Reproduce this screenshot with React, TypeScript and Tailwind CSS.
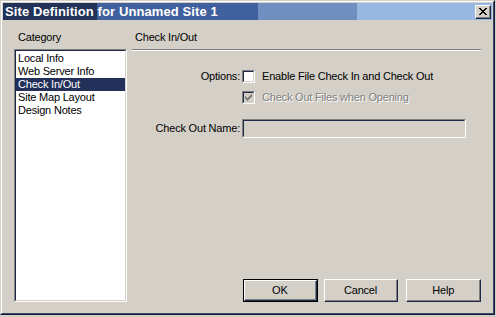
import React from "react";

function Check({ gray }: { gray?: boolean }) {
  return (
    <svg width="7" height="7" viewBox="0 0 7 7" className="block">
      <path
        d="M0 2h1v1h1v1h1V3h1V2h1V1h1V0h1v3h-1v1h-1v1h-1v1h-1v1h-1V6H1V5H0z"
        fill={gray ? "#808080" : "#000"}
      />
    </svg>
  );
}

function CheckBox({ checked, disabled }: { checked?: boolean; disabled?: boolean }) {
  return (
    <div className="w-[13px] h-[13px] border-t border-l border-t-[#808080] border-l-[#808080] border-r border-b border-r-white border-b-white">
      <div
        className={
          "w-full h-full border-t border-l border-t-[#1f2a48] border-l-[#1f2a48] border-r border-b border-r-[#d4d0c8] border-b-[#d4d0c8] flex items-center justify-center " +
          (disabled ? "bg-[#d4d0c8]" : "bg-white")
        }
      >
        {checked && <Check gray={disabled} />}
      </div>
    </div>
  );
}

function Button({ label, isDefault, className }: { label: string; isDefault?: boolean; className?: string }) {
  const inner = (
    <div className="w-full h-full border-t border-l border-t-white border-l-white border-r border-b border-r-[#1f2a48] border-b-[#1f2a48]">
      <div className="w-full h-full border-r border-b border-r-[#808080] border-b-[#808080] flex items-center justify-center">
        {label}
      </div>
    </div>
  );
  return (
    <div className={"w-[75px] h-[23px] " + (className ?? "")}>
      {isDefault ? <div className="w-full h-full border border-black">{inner}</div> : inner}
    </div>
  );
}

export default function App() {
  return (
    <div className="w-[496px] h-[317px] bg-[#d4d0c8] font-['Liberation_Sans',Arial,sans-serif] text-[11px] leading-[13px] tracking-[-0.2px] text-black">
      <div className="w-[495px] h-[315px] border border-t-[#d4d0c8] border-l-[#d4d0c8] border-r-[#0f1b3a] border-b-[#0f1b3a]">
        <div className="w-full h-full border border-t-white border-l-white border-r-[#3c4a6c] border-b-[#3c4a6c] p-px flex flex-col">
          {/* Title bar */}
          <div className="h-[17px] flex items-center bg-[linear-gradient(to_right,#223258_0px,#223258_94px,#41609e_94px,#41609e_255px,#6f8fc0_255px,#6f8fc0_354px,#98b8e1_354px)]">
            <span className="pl-[2px] text-white font-bold text-[13px] leading-[17px] tracking-[0.1px] whitespace-nowrap">
              Site Definition for Unnamed Site 1
            </span>
            <div className="ml-auto mr-px w-[16px] h-[14px] border-t border-l border-t-white border-l-white border-r border-b border-r-[#1f2a48] border-b-[#1f2a48] bg-[#d4d0c8]">
              <div className="w-full h-full border-r border-b border-r-[#808080] border-b-[#808080] flex items-center justify-center">
                <svg width="8" height="7" viewBox="0 0 8 7" className="block">
                  <path d="M0 0h2v1h1v1h2V1h1V0h2v1H7v1H6v1H5v1h1v1h1v1h1v1H6V6H5V5H3v1H2v1H0V6h1V5h1V4h1V3H2V2H1V1H0z" fill="#000" />
                </svg>
              </div>
            </div>
          </div>

          {/* Body */}
          <div className="flex-1 flex pl-[11px] pb-[10px]">
            {/* Left column */}
            <div className="w-[113px] flex flex-col">
              <div className="mt-[11px] h-[13px] pl-[4px] whitespace-nowrap">Category</div>
              <div className="mt-[5px] flex-1 border-t border-l border-t-[#808080] border-l-[#808080] border-r border-b border-r-white border-b-white">
                <div className="w-full h-full bg-white border-t border-l border-t-[#1f2a48] border-l-[#1f2a48] border-r border-b border-r-[#d4d0c8] border-b-[#d4d0c8] pt-px">
                  <div className="h-[13px] pl-[2px] whitespace-nowrap">Local Info</div>
                  <div className="h-[13px] pl-[2px] whitespace-nowrap">Web Server Info</div>
                  <div className="h-[13px] pl-[2px] whitespace-nowrap bg-[#22305a] text-white">Check In/Out</div>
                  <div className="h-[13px] pl-[2px] whitespace-nowrap">Site Map Layout</div>
                  <div className="h-[13px] pl-[2px] whitespace-nowrap">Design Notes</div>
                </div>
              </div>
            </div>

            {/* Right column */}
            <div className="ml-[5px] w-[349px] flex flex-col">
              <div className="mt-[11px] h-[13px] pl-[3px] whitespace-nowrap">Check In/Out</div>
              <div className="mt-[5px] border-t border-t-[#808080] border-b border-b-white" />

              <div className="mt-[19px] grid grid-cols-[108px_1fr] gap-x-[2px] items-center">
                <div className="text-right whitespace-nowrap">Options:</div>
                <div className="flex items-center gap-[7px]">
                  <CheckBox />
                  <span className="whitespace-nowrap">Enable File Check In and Check Out</span>
                </div>

                <div className="mt-[8px]" />
                <div className="mt-[8px] flex items-center gap-[7px]">
                  <CheckBox checked disabled />
                  <span className="whitespace-nowrap text-[#808080] [text-shadow:1px_1px_0_#ffffff]">Check Out Files when Opening</span>
                </div>

                <div className="mt-[15px] text-right whitespace-nowrap">Check Out Name:</div>
                <div className="mt-[15px] w-[224px] h-[19px] border-t border-l border-t-[#808080] border-l-[#808080] border-r border-b border-r-white border-b-white">
                  <div className="w-full h-full bg-[#d4d0c8] border-t border-l border-t-[#1f2a48] border-l-[#1f2a48] border-r border-b border-r-[#d4d0c8] border-b-[#d4d0c8]" />
                </div>
              </div>

              <div className="mt-auto flex">
                <Button label="OK" isDefault className="ml-[111px]" />
                <Button label="Cancel" className="ml-[6px]" />
                <Button label="Help" className="ml-[8px]" />
              </div>
            </div>
          </div>
        </div>
      </div>
    </div>
  );
}
